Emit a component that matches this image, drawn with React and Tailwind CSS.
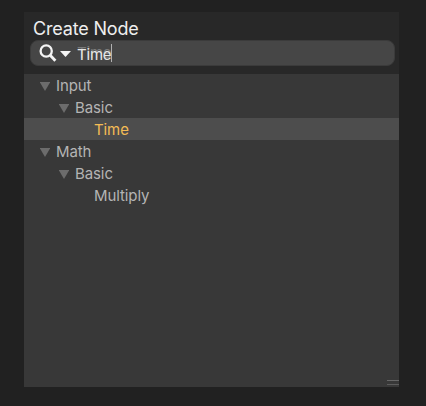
const rows = [
  { label: "Input", pad: "pl-[16px]", open: true },
  { label: "Basic", pad: "pl-[35px]", open: true },
  { label: "Time", pad: "pl-[70px]", selected: true },
  { label: "Math", pad: "pl-[16px]", open: true },
  { label: "Basic", pad: "pl-[35px]", open: true },
  { label: "Multiply", pad: "pl-[70px]" },
];

function TreeRow({ label, pad, open, selected }) {
  return (
    <div
      className={`flex h-[22px] items-center pt-[2px] text-[15px] leading-[20px] ${pad} ${
        selected ? "bg-[#4d4d4d] text-[#f4bc55]" : "text-[#b4b4b4]"
      }`}
    >
      {open && (
        <svg className="mr-[6px] h-[9px] w-[10px] shrink-0" viewBox="0 0 10 9">
          <path d="M-0.3 0H10.3L5 9Z" fill="#6c6c6c" />
        </svg>
      )}
      <span className="tracking-[-0.1px]">{label}</span>
    </div>
  );
}

export default function App() {
  return (
    <div className="h-[406px] w-[426px] bg-[#212121] pt-3 pl-6 font-['Inter',sans-serif]">
      <div className="flex h-[375px] w-[375px] flex-col bg-[#383838]">
        <header className="h-[62px] bg-[#282828] pt-[6px] pl-[6px]">
          <h1 className="h-[22px] pl-[3px] text-[18px] leading-[22px] tracking-[-0.17px] text-[#eeeeee]">
            Create Node
          </h1>
          <div className="flex h-[26px] w-[365px] items-center rounded-[8px] border border-[#3b3b3b] bg-[#464646] pl-[8px]">
            <svg className="h-[18px] w-[18px] shrink-0" viewBox="0 0 18 18" fill="none" stroke="#f4f4f4">
              <circle cx="7.2" cy="7" r="5.6" strokeWidth="2.3" />
              <path d="M11.2 11.2L16.4 16.8" strokeWidth="2.8" />
            </svg>
            <svg className="mt-[2px] ml-[3px] h-[6px] w-[11px] shrink-0" viewBox="0 0 11 6">
              <path d="M0 0H11L5.5 6Z" fill="#f4f4f4" />
            </svg>
            <span className="ml-[6px] pt-[4px] text-[15px] leading-[20px] tracking-[-0.2px] text-[#e6e6e6] [text-shadow:0_-2px_0_#7a7a7a]">
              Time
            </span>
            <span className="h-[18px] w-px bg-[#b0b0b0]" />
          </div>
        </header>
        <main className="flex-1">
          {rows.map((row, i) => (
            <TreeRow key={i} {...row} />
          ))}
        </main>
        <div className="flex h-[7px] flex-col gap-[3px] self-end">
          <span className="h-px w-[12px] bg-[#676767]" />
          <span className="h-px w-[12px] bg-[#5c5c5c]" />
        </div>
      </div>
    </div>
  );
}
